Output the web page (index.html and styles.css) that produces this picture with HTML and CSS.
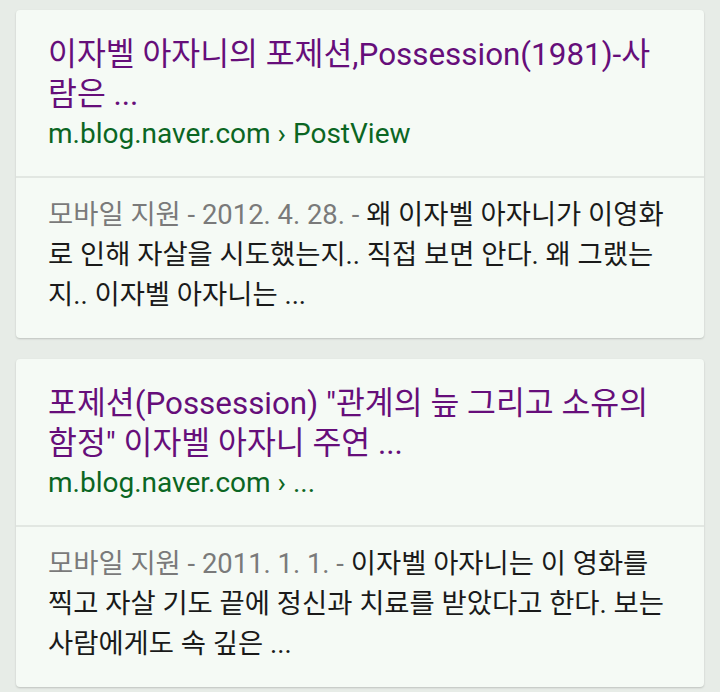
FILE: index.html
```html
<!DOCTYPE html>
<html lang="ko">
<head>
<meta charset="utf-8">
<link rel="stylesheet" href="styles.css">
</head>
<body>
<main class="results">
  <article class="card">
    <div class="card-head">
      <a class="title">이자벨 아자니의 포제션,Possession(1981)-사<br>람은 ...</a>
      <div class="url">m.blog.naver.com › PostView</div>
    </div>
    <div class="card-body">
      <p class="snippet"><span class="meta">모바일 지원 - 2012. 4. 28. - </span>왜 이자벨 아자니가 이영화<br>로 인해 자살을 시도했는지.. 직접 보면 안다. 왜 그랬는<br>지.. 이자벨 아자니는 ...</p>
    </div>
  </article>
  <article class="card">
    <div class="card-head">
      <a class="title">포제션(Possession) "관계의 늪 그리고 소유의<br>함정" 이자벨 아자니 주연 ...</a>
      <div class="url">m.blog.naver.com › ...</div>
    </div>
    <div class="card-body">
      <p class="snippet"><span class="meta">모바일 지원 - 2011. 1. 1. - </span>이자벨 아자니는 이 영화를<br>찍고 자살 기도 끝에 정신과 치료를 받았다고 한다. 보는<br>사람에게도 속 깊은 ...</p>
    </div>
  </article>
</main>
</body>
</html>
```

FILE: styles.css
```css
html, body {
  margin: 0;
  padding: 0;
  background: #e7ece7;
}
body {
  font-family: Roboto, "Noto Sans CJK KR", sans-serif;
  width: 720px;
  height: 692px;
  overflow: hidden;
}
.results {
  display: flex;
  flex-direction: column;
  gap: 21px;
  padding: 10px 16px 0;
}
.card {
  background: #f5faf5;
  border-radius: 4px;
  box-shadow: 0 1px 2px rgba(0, 0, 0, 0.18);
}
.card-head {
  padding: 25px 32px 23px;
  border-bottom: 2px solid #e2e7e2;
}
.title {
  display: block;
  color: #660e7a;
  font-size: 31.4px;
  line-height: 40px;
  white-space: nowrap;
  text-decoration: none;
}
.url {
  color: #0b6623;
  font-size: 28px;
  line-height: 38px;
  white-space: nowrap;
}
.card-body {
  padding: 17px 32px 23px;
}
.snippet {
  margin: 0;
  color: #1a1a1a;
  font-size: 27.4px;
  line-height: 40px;
  white-space: nowrap;
}
.meta {
  color: #7a7a7a;
}
```
